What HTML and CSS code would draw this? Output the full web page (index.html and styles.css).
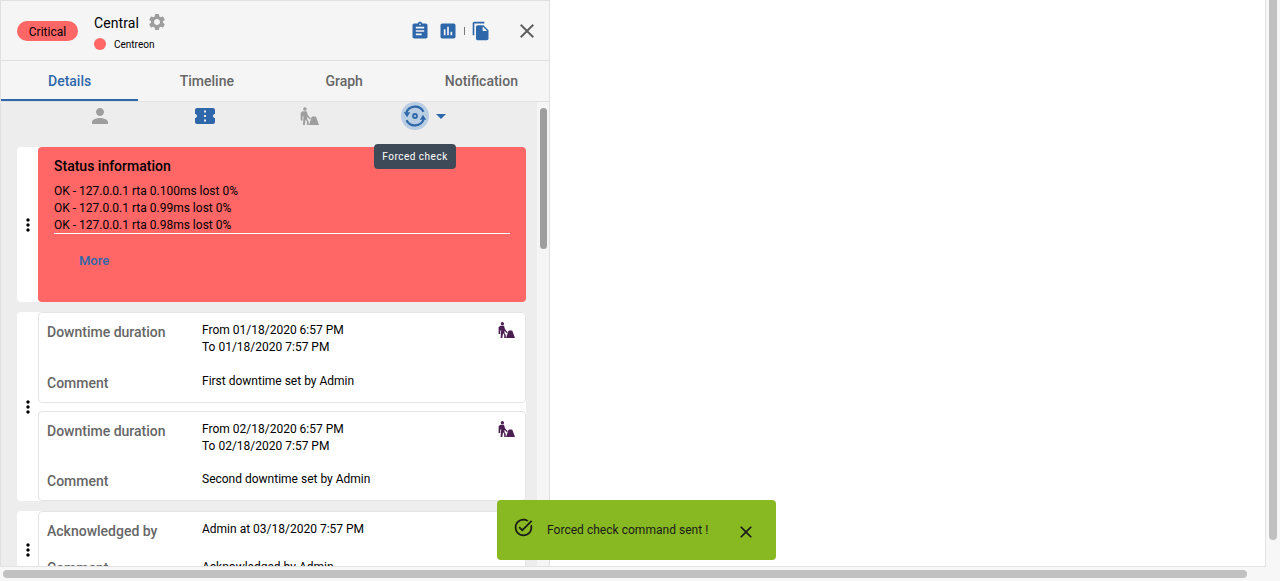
FILE: index.html
```html
<!DOCTYPE html>
<html lang="en">
<head>
<meta charset="utf-8">
<title>Resource details</title>
<link rel="stylesheet" href="styles.css">
</head>
<body>
<svg class="defs" aria-hidden="true">
  <defs>
    <symbol id="digger" viewBox="0 0 17 16">
      <circle cx="4.4" cy="1.7" r="1.6"/>
      <path d="M2.4 3.8h3.6l1 3.4 2.8 3.2-.9.8-2.4-2.5v2.6l1.3 1.6V16H6.2v-3.2L5 11.3 4.3 16H2.6l.6-8-.9.7v3.3H.6V5.2z"/>
      <path d="M8 16l2.4-7c.1-.4.4-.6.8-.6h2.4c.4 0 .7.2.8.6L17 16z"/>
    </symbol>
  </defs>
</svg>
<div class="page">
  <div class="viewport">
    <aside class="panel">
      <header class="head">
        <span class="pill">Critical</span>
        <div class="title">
          <div class="name-row">
            <span class="name">Central</span>
            <svg class="gear" viewBox="0 0 24 24"><path d="M19.14 12.94c.04-.3.06-.61.06-.94 0-.32-.02-.64-.07-.94l2.03-1.58c.18-.14.23-.41.12-.61l-1.92-3.32c-.12-.22-.37-.29-.59-.22l-2.39.96c-.5-.38-1.03-.7-1.62-.94l-.36-2.54c-.04-.24-.24-.41-.48-.41h-3.84c-.24 0-.43.17-.47.41l-.36 2.54c-.59.24-1.13.57-1.62.94l-2.39-.96c-.22-.08-.47 0-.59.22L2.74 8.87c-.12.21-.08.47.12.61l2.03 1.58c-.05.3-.09.63-.09.94s.02.64.07.94l-2.03 1.58c-.18.14-.23.41-.12.61l1.92 3.32c.12.22.37.29.59.22l2.39-.96c.5.38 1.03.7 1.62.94l.36 2.54c.05.24.24.41.48.41h3.84c.24 0 .44-.17.47-.41l.36-2.54c.59-.24 1.13-.56 1.62-.94l2.39.96c.22.08.47 0 .59-.22l1.92-3.32c.12-.22.07-.47-.12-.61l-2.01-1.58zM12 15.6c-1.98 0-3.6-1.62-3.6-3.6s1.62-3.6 3.6-3.6 3.6 1.62 3.6 3.6-1.62 3.6-3.6 3.6z"/></svg>
          </div>
          <div class="parent-row"><span class="dot"></span><span class="parent">Centreon</span></div>
        </div>
        <div class="actions">
          <svg class="act" viewBox="0 0 24 24"><path d="M19 3h-4.18C14.4 1.84 13.3 1 12 1c-1.3 0-2.4.84-2.82 2H5c-1.1 0-2 .9-2 2v14c0 1.1.9 2 2 2h14c1.1 0 2-.9 2-2V5c0-1.1-.9-2-2-2zm-7 0c.55 0 1 .45 1 1s-.45 1-1 1-1-.45-1-1 .45-1 1-1zm2 14H7v-2h7v2zm3-4H7v-2h10v2zm0-4H7V7h10v2z"/></svg>
          <svg class="act" viewBox="0 0 24 24"><path d="M19 3H5c-1.1 0-2 .9-2 2v14c0 1.1.9 2 2 2h14c1.1 0 2-.9 2-2V5c0-1.1-.9-2-2-2zM9 17H7v-7h2v7zm4 0h-2V7h2v10zm4 0h-2v-4h2v4z"/></svg>
          <span class="sep"></span>
          <svg class="act" viewBox="0 0 24 24"><path d="M16 1H4c-1.1 0-2 .9-2 2v14h2V3h12V1zm-1 4l6 6v10c0 1.1-.9 2-2 2H7.99C6.89 23 6 22.1 6 21l.01-14c0-1.1.89-2 1.99-2h7zm-1 7h5.5L14 6.5V12z"/></svg>
        </div>
        <svg class="close" viewBox="0 0 24 24"><path d="M19 6.41L17.59 5 12 10.59 6.41 5 5 6.41 10.59 12 5 17.59 6.41 19 12 13.41 17.59 19 19 17.59 13.41 12z"/></svg>
      </header>
      <nav class="tabs">
        <span class="tab active">Details</span>
        <span class="tab">Timeline</span>
        <span class="tab">Graph</span>
        <span class="tab">Notification</span>
      </nav>
      <div class="body">
        <div class="content">
          <div class="filters">
            <span class="filter"><svg class="f-ico grey" viewBox="0 0 24 24"><path d="M12 12c2.21 0 4-1.79 4-4s-1.79-4-4-4-4 1.79-4 4 1.79 4 4 4zm0 2c-2.67 0-8 1.34-8 4v2h16v-2c0-2.66-5.33-4-8-4z"/></svg></span>
            <span class="filter"><svg class="f-ico blue" viewBox="0 0 24 24"><path d="M22 10V6c0-1.11-.9-2-2-2H4c-1.1 0-1.99.89-1.99 2v4c1.1 0 1.99.9 1.99 2s-.89 2-2 2v4c0 1.1.9 2 2 2h16c1.1 0 2-.9 2-2v-4c-1.1 0-2-.9-2-2s.9-2 2-2zm-9 7.5h-2v-2h2v2zm0-4.5h-2v-2h2v2zm0-4.5h-2v-2h2v2z"/></svg></span>
            <span class="filter"><svg class="f-dig grey"><use href="#digger"/></svg></span>
            <span class="filter">
              <span class="halo">
                <svg class="sync" viewBox="0 0 24 24"><path class="arc" d="M3.2 9A9.4 9.4 0 0 1 20.5 7.8"/><path class="arc" d="M20.8 15A9.4 9.4 0 0 1 3.5 16.2"/><path d="M0.8 8.2h6.4l-3.2 5zM23.2 15.8h-6.4l3.2-5z"/><circle class="ring" cx="12" cy="12" r="2"/></svg>
              </span>
              <svg class="caret" viewBox="0 0 24 24"><path d="M7 10l5 5 5-5z"/></svg>
            </span>
          </div>
          <div class="tooltip">Forced check</div>
          <section class="card">
            <div class="handle"><svg class="more" viewBox="0 0 24 24"><path d="M12 8c1.1 0 2-.9 2-2s-.9-2-2-2-2 .9-2 2 .9 2 2 2zm0 2c-1.1 0-2 .9-2 2s.9 2 2 2 2-.9 2-2-.9-2-2-2zm0 6c-1.1 0-2 .9-2 2s.9 2 2 2 2-.9 2-2-.9-2-2-2z"/></svg></div>
            <div class="inner">
              <div class="status">
                <h2>Status information</h2>
                <div class="output">
                  <p>OK - 127.0.0.1 rta 0.100ms lost 0%</p>
                  <p>OK - 127.0.0.1 rta 0.99ms lost 0%</p>
                  <p>OK - 127.0.0.1 rta 0.98ms lost 0%</p>
                </div>
                <span class="more-link">More</span>
              </div>
            </div>
          </section>
          <section class="card">
            <div class="handle"><svg class="more" viewBox="0 0 24 24"><path d="M12 8c1.1 0 2-.9 2-2s-.9-2-2-2-2 .9-2 2 .9 2 2 2zm0 2c-1.1 0-2 .9-2 2s.9 2 2 2 2-.9 2-2-.9-2-2-2zm0 6c-1.1 0-2 .9-2 2s.9 2 2 2 2-.9 2-2-.9-2-2-2z"/></svg></div>
            <div class="inner stack">
              <div class="entry">
                <span class="label">Downtime duration</span>
                <div class="value"><p>From 01/18/2020 6:57 PM</p><p>To 01/18/2020 7:57 PM</p></div>
                <svg class="d-ico"><use href="#digger"/></svg>
                <span class="label l2">Comment</span>
                <div class="value v2">First downtime set by Admin</div>
              </div>
              <div class="entry">
                <span class="label">Downtime duration</span>
                <div class="value"><p>From 02/18/2020 6:57 PM</p><p>To 02/18/2020 7:57 PM</p></div>
                <svg class="d-ico"><use href="#digger"/></svg>
                <span class="label l2">Comment</span>
                <div class="value v2">Second downtime set by Admin</div>
              </div>
            </div>
          </section>
          <section class="card">
            <div class="handle"><svg class="more" viewBox="0 0 24 24"><path d="M12 8c1.1 0 2-.9 2-2s-.9-2-2-2-2 .9-2 2 .9 2 2 2zm0 2c-1.1 0-2 .9-2 2s.9 2 2 2 2-.9 2-2-.9-2-2-2zm0 6c-1.1 0-2 .9-2 2s.9 2 2 2 2-.9 2-2-.9-2-2-2z"/></svg></div>
            <div class="inner stack">
              <div class="entry ack">
                <span class="label">Acknowledged by</span>
                <div class="value">Admin at 03/18/2020 7:57 PM</div>
                <span class="label l2">Comment</span>
                <div class="value v2">Acknowledged by Admin</div>
              </div>
            </div>
          </section>
        </div>
        <div class="panel-scroll"><span class="panel-thumb"></span></div>
      </div>
    </aside>
    <div class="toast">
      <svg class="toast-ico" viewBox="0 0 24 24"><path d="M22 5.18 10.59 16.6l-4.24-4.24 1.41-1.41 2.83 2.83 10-10L22 5.18zm-2.21 5.04c.13.57.21 1.17.21 1.78 0 4.42-3.58 8-8 8s-8-3.58-8-8 3.58-8 8-8c1.58 0 3.04.46 4.28 1.25l1.44-1.44C16.1 2.67 14.13 2 12 2 6.48 2 2 6.48 2 12s4.48 10 10 10 10-4.48 10-10c0-1.19-.22-2.33-.6-3.39l-1.61 1.61z"/></svg>
      <span class="toast-text">Forced check command sent !</span>
      <svg class="toast-close" viewBox="0 0 24 24"><path d="M19 6.41L17.59 5 12 10.59 6.41 5 5 6.41 10.59 12 5 17.59 6.41 19 12 13.41 17.59 19 19 17.59 13.41 12z"/></svg>
    </div>
  </div>
  <div class="v-bar"><span class="v-thumb"></span></div>
  <div class="h-bar"><span class="h-thumb"></span></div>
</div>
</body>
</html>
```

FILE: styles.css
```css
* { box-sizing: border-box; }
html, body { margin: 0; height: 100%; overflow: hidden; }
body { font-family: Roboto, "Liberation Sans", sans-serif; color: #000; background: #fff; }
p { margin: 0; }
.defs { position: absolute; width: 0; height: 0; }

.page {
  width: 1280px;
  height: 581px;
  display: grid;
  grid-template-columns: 1266px 14px;
  grid-template-rows: 567px 14px;
  background: #f7f7f7;
}
.viewport {
  position: relative;
  background: #fff;
  border-right: 1px solid #e3e3e3;
  border-bottom: 1px solid #e3e3e3;
  overflow: hidden;
}
.v-bar { padding: 0 3px; }
.v-thumb { display: block; width: 8px; height: 540px; background: #c1c1c1; border-radius: 0 0 4px 4px; }
.h-bar { grid-column: 1 / 3; padding: 3px 0 3px 3px; }
.h-thumb { display: block; width: 1244px; height: 8px; background: #c1c1c1; border-radius: 4px; }

.panel {
  width: 550px;
  height: 566px;
  display: flex;
  flex-direction: column;
  background: #ededed;
  border-right: 1px solid #e0e0e0;
  border-left: 1px solid #e0e0e0;
  border-top: 1px solid #e0e0e0;
}
.head {
  height: 60px;
  flex: none;
  display: flex;
  align-items: center;
  padding: 0 9px 0 16px;
  background: #f5f5f5;
  border-bottom: 1px solid #e0e0e0;
}
.pill {
  width: 61px;
  height: 20px;
  border-radius: 10px;
  background: #ff6666;
  font-size: 12px;
  line-height: 22px;
  text-align: center;
}
.title { margin: 10px 0 0 16px; width: 309px; align-self: flex-start; }
.name-row { display: flex; align-items: center; height: 24px; }
.name { font-size: 14px; letter-spacing: .1px; }
.gear { width: 20px; height: 20px; margin-left: 8px; margin-top: -3px; fill: #9e9e9e; }
.parent-row { display: flex; align-items: center; height: 16px; margin-top: 1px; }
.dot { width: 12px; height: 12px; border-radius: 50%; background: #ff6666; }
.parent { margin-left: 8px; font-size: 10px; }
.actions { display: flex; align-items: center; margin-left: 7px; }
.act { width: 20px; height: 20px; fill: #2e68aa; margin-right: 8px; }
.sep { width: 1px; height: 8px; background: #777; margin: 0 6px 0 -2px; }
.act:last-child { margin-right: 0; }
.close { width: 24px; height: 24px; fill: #616161; margin-left: 24px; }

.tabs {
  height: 41px;
  flex: none;
  display: grid;
  grid-template-columns: repeat(4, 137.25px);
  background: #f5f5f5;
  border-bottom: 1px solid #e0e0e0;
}
.tab {
  font-size: 14px;
  font-weight: 500;
  line-height: 40px;
  text-align: center;
  color: #666;
}
.tab.active { color: #2e68aa; border-bottom: 2px solid #2e68aa; height: 40px; }

.body { flex: 1; min-height: 0; display: flex; position: relative; }
.content { width: 536px; padding: 0 11px 0 16px; flex: none; position: relative; overflow: hidden; }
.panel-scroll { flex: none; width: 12px; background: #f5f5f5; padding: 6px 2px 0 2px; }
.panel-thumb { display: block; width: 7px; height: 141px; background: #9e9e9e; border-radius: 4px; margin-left: 1px; }

.filters {
  height: 31px;
  display: grid;
  grid-template-columns: repeat(4, 105px);
  margin-left: 30px;
}
.filter { display: flex; align-items: center; justify-content: center; height: 28px; position: relative; }
.f-ico { width: 24px; height: 24px; }
.f-dig { width: 19px; height: 18px; }
.grey { fill: #9e9e9e; }
.blue { fill: #2e68aa; }
.halo {
  width: 28px;
  height: 28px;
  border-radius: 50%;
  background: #b9cde3;
  display: flex;
  align-items: center;
  justify-content: center;
}
.sync { width: 24px; height: 24px; fill: #2e68aa; }
.arc { fill: none; stroke: #2e68aa; stroke-width: 2.2; }
.ring { fill: none; stroke: #2e68aa; stroke-width: 1.8; }
.caret { position: absolute; left: 67px; top: 2px; width: 24px; height: 24px; fill: #2e68aa; }

.tooltip {
  position: absolute;
  left: 373px;
  top: 42px;
  width: 82px;
  height: 25px;
  background: #3f4a58;
  border-radius: 4px;
  color: #fff;
  font-size: 10px;
  line-height: 25px;
  text-align: center;
  letter-spacing: .5px;
  z-index: 3;
}

.card {
  display: flex;
  background: #fff;
  border-radius: 4px;
  margin-top: 14px;
  margin-bottom: -5px;
}
.card + .card { margin-top: 15px; }
.handle { width: 21px; flex: none; display: flex; align-items: center; justify-content: center; }
.more { width: 20px; height: 20px; fill: #000; margin-left: 1px; }
.inner { flex: 1; min-width: 0; }
.status {
  height: 155px;
  background: #ff6666;
  border-radius: 4px;
  padding: 11px 16px 0;
}
h2 { margin: 0; font-size: 14px; font-weight: 500; line-height: 16px; }
.output { margin-top: 9px; border-bottom: 1px solid #fff; font-size: 12px; line-height: 17px; height: 51px; }
.more-link { display: block; margin: 19px 0 0 25px; color: #2e68aa; font-size: 13px; font-weight: 500; line-height: 16px; }

.stack { display: flex; flex-direction: column; }
.entry {
  display: grid;
  grid-template-columns: 155px 1fr 20px;
  grid-template-rows: 52px auto;
  align-content: start;
  height: 91px;
  background: #fff;
  border: 1px solid #e4e4e4;
  border-radius: 4px;
  padding: 8px 7px 0 8px;
}
.entry + .entry { margin-top: 8px; height: 90px; grid-template-rows: 51px auto; }
.entry.ack { height: 78px; grid-template-rows: 38px auto; }
.label { font-size: 14px; color: #666; line-height: 18px; font-weight: 500; margin-top: 2px; }
.value { font-size: 12px; line-height: 17px; margin-top: 1px; }
.l2 { grid-column: 1; align-self: start; margin-top: 1px; }
.v2 { grid-column: 2; align-self: start; margin-top: 0; }
.ack .v2 { margin-top: 1px; }
.d-ico { width: 17px; height: 16px; fill: #4a1e50; grid-column: 3; grid-row: 1; margin-top: 1px; }

.toast {
  position: absolute;
  left: 497px;
  top: 500px;
  width: 279px;
  height: 60px;
  background: #88b922;
  border-radius: 4px;
  display: flex;
  align-items: flex-start;
  padding: 17px 0 0 16px;
  font-size: 12px;
  color: #1a1a1a;
  z-index: 4;
}
.toast-ico { width: 21px; height: 21px; fill: #1a1a1a; }
.toast-text { margin: 6px 0 0 13px; width: 189px; letter-spacing: .03px; }
.toast-close { width: 20px; height: 20px; fill: #1a1a1a; margin: 5px 0 0 0; }
```
